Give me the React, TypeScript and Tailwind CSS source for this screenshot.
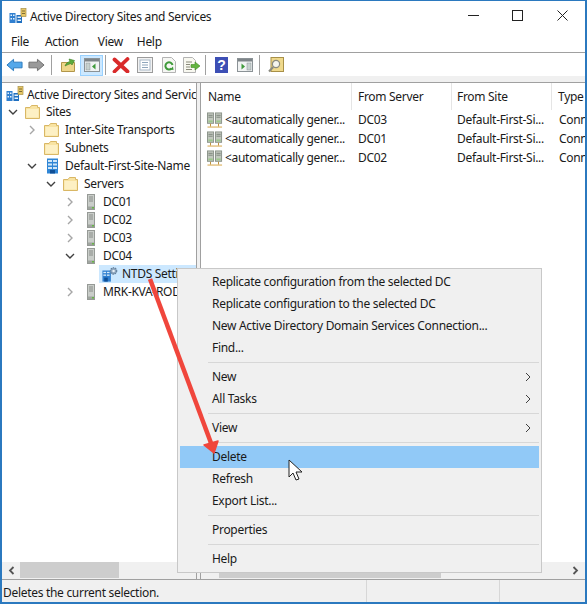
import React from "react";

const font = "font-['Noto_Sans','Open_Sans',sans-serif]";

function Chevron({ open }: { open?: boolean }) {
  return (
    <svg width="10" height="10" viewBox="0 0 10 10" className="shrink-0">
      {open ? (
        <path d="M1 3 L5 7 L9 3" fill="none" stroke="#404040" strokeWidth="1.4" />
      ) : (
        <path d="M3 1 L7 5 L3 9" fill="none" stroke="#a6a6a6" strokeWidth="1.4" />
      )}
    </svg>
  );
}

function Folder() {
  return (
    <svg width="16" height="16" viewBox="1 0 16 16" className="-ml-[1px] shrink-0">
      <path d="M1.5 3.5 H6 L7.5 1.5 H13.5 V3.5 H15.5 V14.5 H1.5 Z" fill="#f8e3a2" stroke="#d9b765" strokeWidth="1" />
      <path d="M2.5 5 H14.5 V13.5 H2.5 Z" fill="#fdf0c4" />
    </svg>
  );
}

function SiteRoot() {
  return (
    <svg width="18" height="16" viewBox="0 0 18 16" className="shrink-0">
      <rect x="0.5" y="5" width="6" height="10" fill="#2f7fd0" />
      <rect x="1.5" y="6.5" width="1.5" height="1.5" fill="#e8f3fc" />
      <rect x="4" y="6.5" width="1.5" height="1.5" fill="#e8f3fc" />
      <rect x="1.5" y="10" width="1.5" height="1.5" fill="#e8f3fc" />
      <rect x="4" y="10" width="1.5" height="1.5" fill="#e8f3fc" />
      <rect x="7.5" y="7" width="5.5" height="8" fill="#1f6fc0" />
      <rect x="8.5" y="8.5" width="3.5" height="1.5" fill="#e8f3fc" />
      <rect x="8.5" y="11.5" width="3.5" height="1.5" fill="#e8f3fc" />
      <rect x="12" y="0.5" width="5" height="8" fill="#e6c765" stroke="#a89048" strokeWidth="0.7" />
      <rect x="13" y="2.5" width="3" height="1" fill="#7d6c38" />
      <rect x="13" y="5" width="3" height="1" fill="#7d6c38" />
    </svg>
  );
}

function Building() {
  return (
    <svg width="14" height="16" viewBox="0 0 14 16" className="shrink-0">
      <rect x="1" y="0.5" width="11" height="15" fill="#2f86d6" />
      <rect x="2" y="2" width="4" height="2" fill="#cfe6f8" />
      <rect x="7" y="2" width="4" height="2" fill="#cfe6f8" />
      <rect x="2" y="5.5" width="4" height="2" fill="#cfe6f8" />
      <rect x="7" y="5.5" width="4" height="2" fill="#cfe6f8" />
      <rect x="2" y="9" width="4" height="2" fill="#cfe6f8" />
      <rect x="7" y="9" width="4" height="2" fill="#cfe6f8" />
      <rect x="4" y="12" width="5" height="3.5" fill="#0f4f96" />
    </svg>
  );
}

function Server() {
  return (
    <svg width="10" height="16" viewBox="0 0 10 16" className="shrink-0">
      <rect x="1.5" y="0.5" width="7" height="15" fill="#c9cdc9" stroke="#969a96" strokeWidth="1" />
      <rect x="3" y="2.5" width="4" height="1" fill="#8a8e8a" />
      <rect x="3" y="4.5" width="4" height="1" fill="#8a8e8a" />
      <rect x="3" y="6.5" width="4" height="1" fill="#8a8e8a" />
      <rect x="2" y="12.5" width="6" height="2.5" fill="#a0a5a0" />
      <rect x="6" y="13" width="2" height="1.5" fill="#66b545" />
    </svg>
  );
}

function Ntds() {
  return (
    <svg width="16" height="17" viewBox="0 0 18 17" className="shrink-0">
      <rect x="0.5" y="4" width="9.5" height="12.5" fill="#2f7fd0" />
      <rect x="1.5" y="5.5" width="3" height="1.5" fill="#d7ebfa" />
      <rect x="5.5" y="5.5" width="3" height="1.5" fill="#d7ebfa" />
      <rect x="1.5" y="8.5" width="3" height="1.5" fill="#d7ebfa" />
      <rect x="5.5" y="8.5" width="3" height="1.5" fill="#d7ebfa" />
      <rect x="2.5" y="12" width="4" height="4.5" fill="#0f4f96" />
      <circle cx="13" cy="4.5" r="3.6" fill="#8ca4bc" stroke="#5f7c98" strokeWidth="1.2" strokeDasharray="1.6 1" />
      <circle cx="13" cy="4.5" r="1.4" fill="#e8f0f7" />
    </svg>
  );
}

function Connection() {
  const one = (x: number) => (
    <g key={x}>
      <rect x={x} y="0.5" width="6.5" height="11" fill="#c2c8be" stroke="#8a9288" strokeWidth="1" />
      <rect x={x + 1} y="2.5" width="4.5" height="1" fill="#7c847b" />
      <rect x={x + 1} y="4.5" width="4.5" height="1" fill="#7c847b" />
      <rect x={x + 1} y="8.5" width="4.5" height="2" fill="#9cc78b" />
      <path d={`M${x + 3.25} 12 V15`} stroke="#b98a2e" strokeWidth="1" />
    </g>
  );
  return (
    <svg width="16" height="16" viewBox="0 0 17 16" className="shrink-0">
      {one(0.5)}
      {one(9)}
      <path d="M0.5 15.5 H16" stroke="#d3a03c" strokeWidth="1" />
    </svg>
  );
}

function TreeRow({
  level,
  arrow,
  icon,
  label,
  selected,
}: {
  level: number;
  arrow?: "open" | "closed";
  icon: React.ReactNode;
  label: string;
  selected?: boolean;
}) {
  return (
    <div className="flex h-[18px] items-center whitespace-nowrap" style={{ paddingLeft: level * 19 + 5 }}>
      <div className="flex w-[18px] shrink-0 items-center pl-[1px]">{arrow && <Chevron open={arrow === "open"} />}</div>
      <div className={`flex h-[18px] items-center gap-[3px] ${selected ? "-ml-[2px] bg-[#cce8ff] pl-[2px]" : ""}`}>
        <div className="flex w-[17px] shrink-0 justify-center">{icon}</div>
        <span className="pl-[1px] pr-2">{label}</span>
      </div>
    </div>
  );
}

function Sep({ className }: { className: string }) {
  return <div className={`h-[20px] w-px shrink-0 bg-[#a0a0a0] ${className}`} />;
}

function ToolIcons() {
  return (
    <div className="flex h-[23px] items-center pl-[4px] pt-[1px]">
      <svg width="17" height="16" viewBox="0 0 18 16" className="shrink-0">
        <path d="M1 8 L8 2 V5 H17 V11 H8 V14 Z" fill="#54a8ea" stroke="#2878bc" strokeWidth="1" />
      </svg>
      <svg width="17" height="16" viewBox="0 0 18 16" className="ml-[5px] shrink-0">
        <path d="M17 8 L10 2 V5 H1 V11 H10 V14 Z" fill="#9a9a9a" stroke="#6e6e6e" strokeWidth="1" />
      </svg>
      <Sep className="ml-[6px]" />
      <svg width="16" height="16" viewBox="0 0 16 16" className="ml-[8px] shrink-0">
        <path d="M1.5 5.5 H14.5 V14.5 H1.5 Z" fill="#eed68a" stroke="#b2964a" />
        <path d="M5 9 C6 6 8 5 10 4.5 L9 2 L14.5 3.5 L12 8 L11 6.5 C9 7 7 8 5 9 Z" fill="#5cab3c" stroke="#3a7d23" strokeWidth="0.6" />
      </svg>
      <div className="ml-[4px] flex h-[21px] w-[23px] shrink-0 items-center justify-center border border-[#99d1ff] bg-[#cce8ff]">
        <svg width="16" height="14" viewBox="0 0 16 14">
          <rect x="0.5" y="0.5" width="15" height="13" fill="#f1f3f3" stroke="#8b9296" />
          <rect x="1" y="1" width="14" height="2.5" fill="#7d8488" />
          <rect x="2" y="5" width="4" height="7" fill="#c7d2cf" stroke="#8b9296" strokeWidth="0.5" />
          <path d="M11.5 5.5 L8 8.5 L11.5 11.5 Z" fill="#3f9a3a" />
        </svg>
      </div>
      <Sep className="ml-[2px]" />
      <svg width="18" height="16" viewBox="0 0 18 16" className="ml-[6px] shrink-0">
        <path d="M2.5 2.5 L15.5 14.5 M15.5 2 L2.5 14.5" stroke="#d92a2a" strokeWidth="3.8" strokeLinecap="round" />
      </svg>
      <svg width="16" height="16" viewBox="0 0 16 16" className="ml-[7px] shrink-0">
        <rect x="0.5" y="0.5" width="15" height="15" fill="#f2f2f2" stroke="#9b9b9b" />
        <rect x="3" y="3" width="10" height="10" fill="#fff" stroke="#a8b7c6" />
        <path d="M5 5.5 H11 M5 8 H11 M5 10.5 H11" stroke="#8fa6bc" />
      </svg>
      <svg width="14" height="16" viewBox="0 0 14 16" className="ml-[9px] shrink-0">
        <path d="M0.5 0.5 H9.5 L13.5 4.5 V15.5 H0.5 Z" fill="#f6f7f4" stroke="#b3b3b3" />
        <path d="M10.5 8 A3.6 3.6 0 1 0 9.5 11.5" fill="none" stroke="#3f9a3a" strokeWidth="2" />
        <path d="M8 12.5 L11.5 13 L11 9.5 Z" fill="#3f9a3a" />
      </svg>
      <svg width="18" height="16" viewBox="0 0 18 16" className="ml-[7px] shrink-0">
        <path d="M0.5 0.5 H9.5 L12.5 3.5 V15.5 H0.5 Z" fill="#f8f8f0" stroke="#b3b3b3" />
        <path d="M3 5 H9 M3 7.5 H7 M3 10 H7 M3 12.5 H9" stroke="#8a8a7a" />
        <path d="M8 7.5 H12 V5 L17 9 L12 13 V10.5 H8 Z" fill="#63b53f" stroke="#3f8a22" strokeWidth="0.6" />
      </svg>
      <Sep className="ml-[4px]" />
      <svg width="13" height="16" viewBox="0 0 13 16" className="ml-[9px] shrink-0">
        <rect x="0" y="0" width="13" height="16" fill="#3d4fb5" />
        <text x="6.5" y="13" textAnchor="middle" fontSize="14" fontWeight="700" fill="#fff" fontFamily="Liberation Sans">?</text>
      </svg>
      <svg width="16" height="14" viewBox="0 0 16 14" className="ml-[9px] shrink-0">
        <rect x="0.5" y="0.5" width="15" height="13" fill="#f1f3f3" stroke="#8b9296" />
        <rect x="1" y="1" width="14" height="2.5" fill="#7d8488" />
        <rect x="10" y="5" width="4" height="7" fill="#c7d2cf" stroke="#8b9296" strokeWidth="0.5" />
        <path d="M4.5 5.5 L8 8.5 L4.5 11.5 Z" fill="#3f9a3a" />
      </svg>
      <Sep className="ml-[6px]" />
      <svg width="16" height="16" viewBox="0 0 16 16" className="ml-[8px] shrink-0">
        <rect x="3" y="0.5" width="12.5" height="14" fill="#efd98c" stroke="#a89048" />
        <circle cx="8" cy="7" r="3.6" fill="#f5f5ee" stroke="#8a8a80" strokeWidth="1.2" />
        <path d="M5.2 10 L1 14.5" stroke="#8a8a80" strokeWidth="2" />
      </svg>
    </div>
  );
}

function MenuItem({ label, arrow, active }: { label: string; arrow?: boolean; active?: boolean }) {
  return (
    <div className={`flex h-[22px] items-center justify-between pl-[32px] pr-[8px] ${active ? "bg-[#91c9f7]" : ""}`}>
      <span>{label}</span>
      {arrow && (
        <svg width="6" height="10" viewBox="0 0 6 10">
          <path d="M1 1 L5 5 L1 9" fill="none" stroke="#404040" strokeWidth="1" />
        </svg>
      )}
    </div>
  );
}

function MenuSep() {
  return (
    <div className="flex h-[7px] items-start pl-[28px] pt-[3px]">
      <div className="h-px w-full bg-[#d7d7d7]" />
    </div>
  );
}

function Row({ from }: { from: string }) {
  return (
    <div className="flex h-[19px] items-center whitespace-nowrap">
      <div className="flex w-[151px] shrink-0 items-center gap-[2px] pl-[6px]">
        <Connection />
        <span>&lt;automatically gener...</span>
      </div>
      <div className="w-[100px] shrink-0 pl-[6px]">{from}</div>
      <div className="w-[100px] shrink-0 pl-[5px]">Default-First-Si...</div>
      <div className="pl-[7px]">Conn</div>
    </div>
  );
}

function HeadCell({ w, label, pad }: { w: string; label: string; pad: string }) {
  return (
    <div className={`flex h-[27px] shrink-0 items-center border-r border-[#e5e5e5] ${pad} ${w}`}>{label}</div>
  );
}

export default function App() {
  return (
    <div className={`relative flex h-[604px] w-[587px] flex-col overflow-hidden border-x-2 border-b-2 border-t border-[#2b79bf] bg-white text-[12px] leading-none tracking-[-0.3px] text-[#1a1a1a] ${font}`}>
      <div className="flex h-[29px] shrink-0 items-center pl-[7px]">
        <SiteRoot />
        <span className="ml-[3px] pt-[2px]">Active Directory Sites and Services</span>
        <div className="ml-auto flex items-center">
          <svg width="11" height="2" viewBox="0 0 11 2" className="mr-[33px]"><rect width="11" height="1" fill="#222" /></svg>
          <svg width="11" height="11" viewBox="0 0 11 11" className="mr-[34px]"><rect x="0.5" y="0.5" width="10" height="10" fill="none" stroke="#222" /></svg>
          <svg width="11" height="11" viewBox="0 0 11 11" className="mr-[17px]"><path d="M0.5 0.5 L10.5 10.5 M10.5 0.5 L0.5 10.5" stroke="#222" /></svg>
        </div>
      </div>
      <div className="flex h-[23px] shrink-0 items-center border-b border-[#a0a0a0] pl-[9px] pt-[2px]">
        <span>File</span>
        <span className="ml-[16px]">Action</span>
        <span className="ml-[19px]">View</span>
        <span className="ml-[14px]">Help</span>
      </div>
      <div className="shrink-0"><ToolIcons /></div>
      <div className="h-[6px] shrink-0 bg-[#f0f0f0]" />
      <div className="flex min-h-0 flex-1 border-t border-[#a0a0a0]">
        <div className="flex w-[195px] shrink-0 flex-col border-r border-[#a0a0a0]">
          <div className="min-h-0 flex-1 overflow-hidden pt-[2px]">
            <div className="flex h-[18px] items-center whitespace-nowrap pl-[4px]">
              <SiteRoot />
              <span className="ml-[3px] pt-[1px]">Active Directory Sites and Servic</span>
            </div>
            <TreeRow level={0} arrow="open" icon={<Folder />} label="Sites" />
            <TreeRow level={1} arrow="closed" icon={<Folder />} label="Inter-Site Transports" />
            <TreeRow level={1} icon={<Folder />} label="Subnets" />
            <TreeRow level={1} arrow="open" icon={<Building />} label="Default-First-Site-Name" />
            <TreeRow level={2} arrow="open" icon={<Folder />} label="Servers" />
            <TreeRow level={3} arrow="closed" icon={<Server />} label="DC01" />
            <TreeRow level={3} arrow="closed" icon={<Server />} label="DC02" />
            <TreeRow level={3} arrow="closed" icon={<Server />} label="DC03" />
            <TreeRow level={3} arrow="open" icon={<Server />} label="DC04" />
            <TreeRow level={4} icon={<Ntds />} label="NTDS Settings" selected />
            <TreeRow level={3} arrow="closed" icon={<Server />} label="MRK-KVA-RODC" />
          </div>
          <div className="flex h-[17px] shrink-0 items-start bg-[#f0f0f0] px-[6px]">
            <svg width="7" height="9" viewBox="0 0 7 9" className="mt-[4px]"><path d="M5.5 1 L2 4.5 L5.5 8" fill="none" stroke="#555" strokeWidth="1.8" /></svg>
            <div className="ml-[5px] h-[16px] w-[99px] bg-[#cdcdcd]" />
          </div>
        </div>
        <div className="w-[3px] shrink-0 bg-[#f0f0f0]" />
        <div className="flex min-w-0 flex-1 flex-col border-l border-[#a0a0a0]">
          <div className="min-h-0 flex-1 overflow-hidden">
            <div className="flex">
              <HeadCell w="w-[151px]" pad="pl-[7px]" label="Name" />
              <HeadCell w="w-[100px]" pad="pl-[6px]" label="From Server" />
              <HeadCell w="w-[100px]" pad="pl-[5px]" label="From Site" />
              <div className="flex h-[27px] items-center pl-[6px]">Type</div>
            </div>
            <Row from="DC03" />
            <Row from="DC01" />
            <Row from="DC02" />
          </div>
          <div className="flex h-[17px] shrink-0 items-center bg-[#f0f0f0]">
            <div className="ml-[18px] mt-[10px] h-[5px] w-[222px] bg-[#cdcdcd]" />
            <svg width="7" height="9" viewBox="0 0 7 9" className="ml-auto mr-[6px]"><path d="M1.5 1 L5 4.5 L1.5 8" fill="none" stroke="#555" strokeWidth="1.8" /></svg>
          </div>
        </div>
      </div>
      <div className="flex h-[23px] shrink-0 items-center border-t border-[#a0a0a0] bg-[#f0f0f0]">
        <div className="flex h-full w-[365px] items-center border-r border-[#d7d7d7] pl-[1px] pt-[3px]">Deletes the current selection.</div>
        <div className="h-full w-[133px] border-r border-[#d7d7d7]" />
      </div>

      {/* context menu, floating over the panes */}
      <div className="absolute left-[175px] top-[267px] w-[365px] border border-[#c8c8c8] bg-[#f0f0f0] p-[2px]">
        <MenuItem label="Replicate configuration from the selected DC" />
        <MenuItem label="Replicate configuration to the selected DC" />
        <MenuItem label="New Active Directory Domain Services Connection..." />
        <MenuItem label="Find..." />
        <MenuSep />
        <MenuItem label="New" arrow />
        <MenuItem label="All Tasks" arrow />
        <MenuSep />
        <MenuItem label="View" arrow />
        <MenuSep />
        <MenuItem label="Delete" active />
        <MenuItem label="Refresh" />
        <MenuItem label="Export List..." />
        <MenuSep />
        <MenuItem label="Properties" />
        <MenuSep />
        <MenuItem label="Help" />
      </div>

      {/* annotation arrow and mouse pointer */}
      <svg width="587" height="604" viewBox="0 0 587 604" className="pointer-events-none absolute left-[-2px] top-[-1px]">
        <path d="M150 279 L211 443" stroke="#f0463c" strokeWidth="4.5" />
        <path d="M204 445 L218 441 L214 453 Z" fill="#f0463c" stroke="#f0463c" strokeWidth="1.5" strokeLinejoin="round" />
        <path d="M289 460 V477 L293 473 L296 480 L299 479 L296 472 L302 472 Z" fill="#fff" stroke="#222" strokeWidth="1" />
      </svg>
    </div>
  );
}
